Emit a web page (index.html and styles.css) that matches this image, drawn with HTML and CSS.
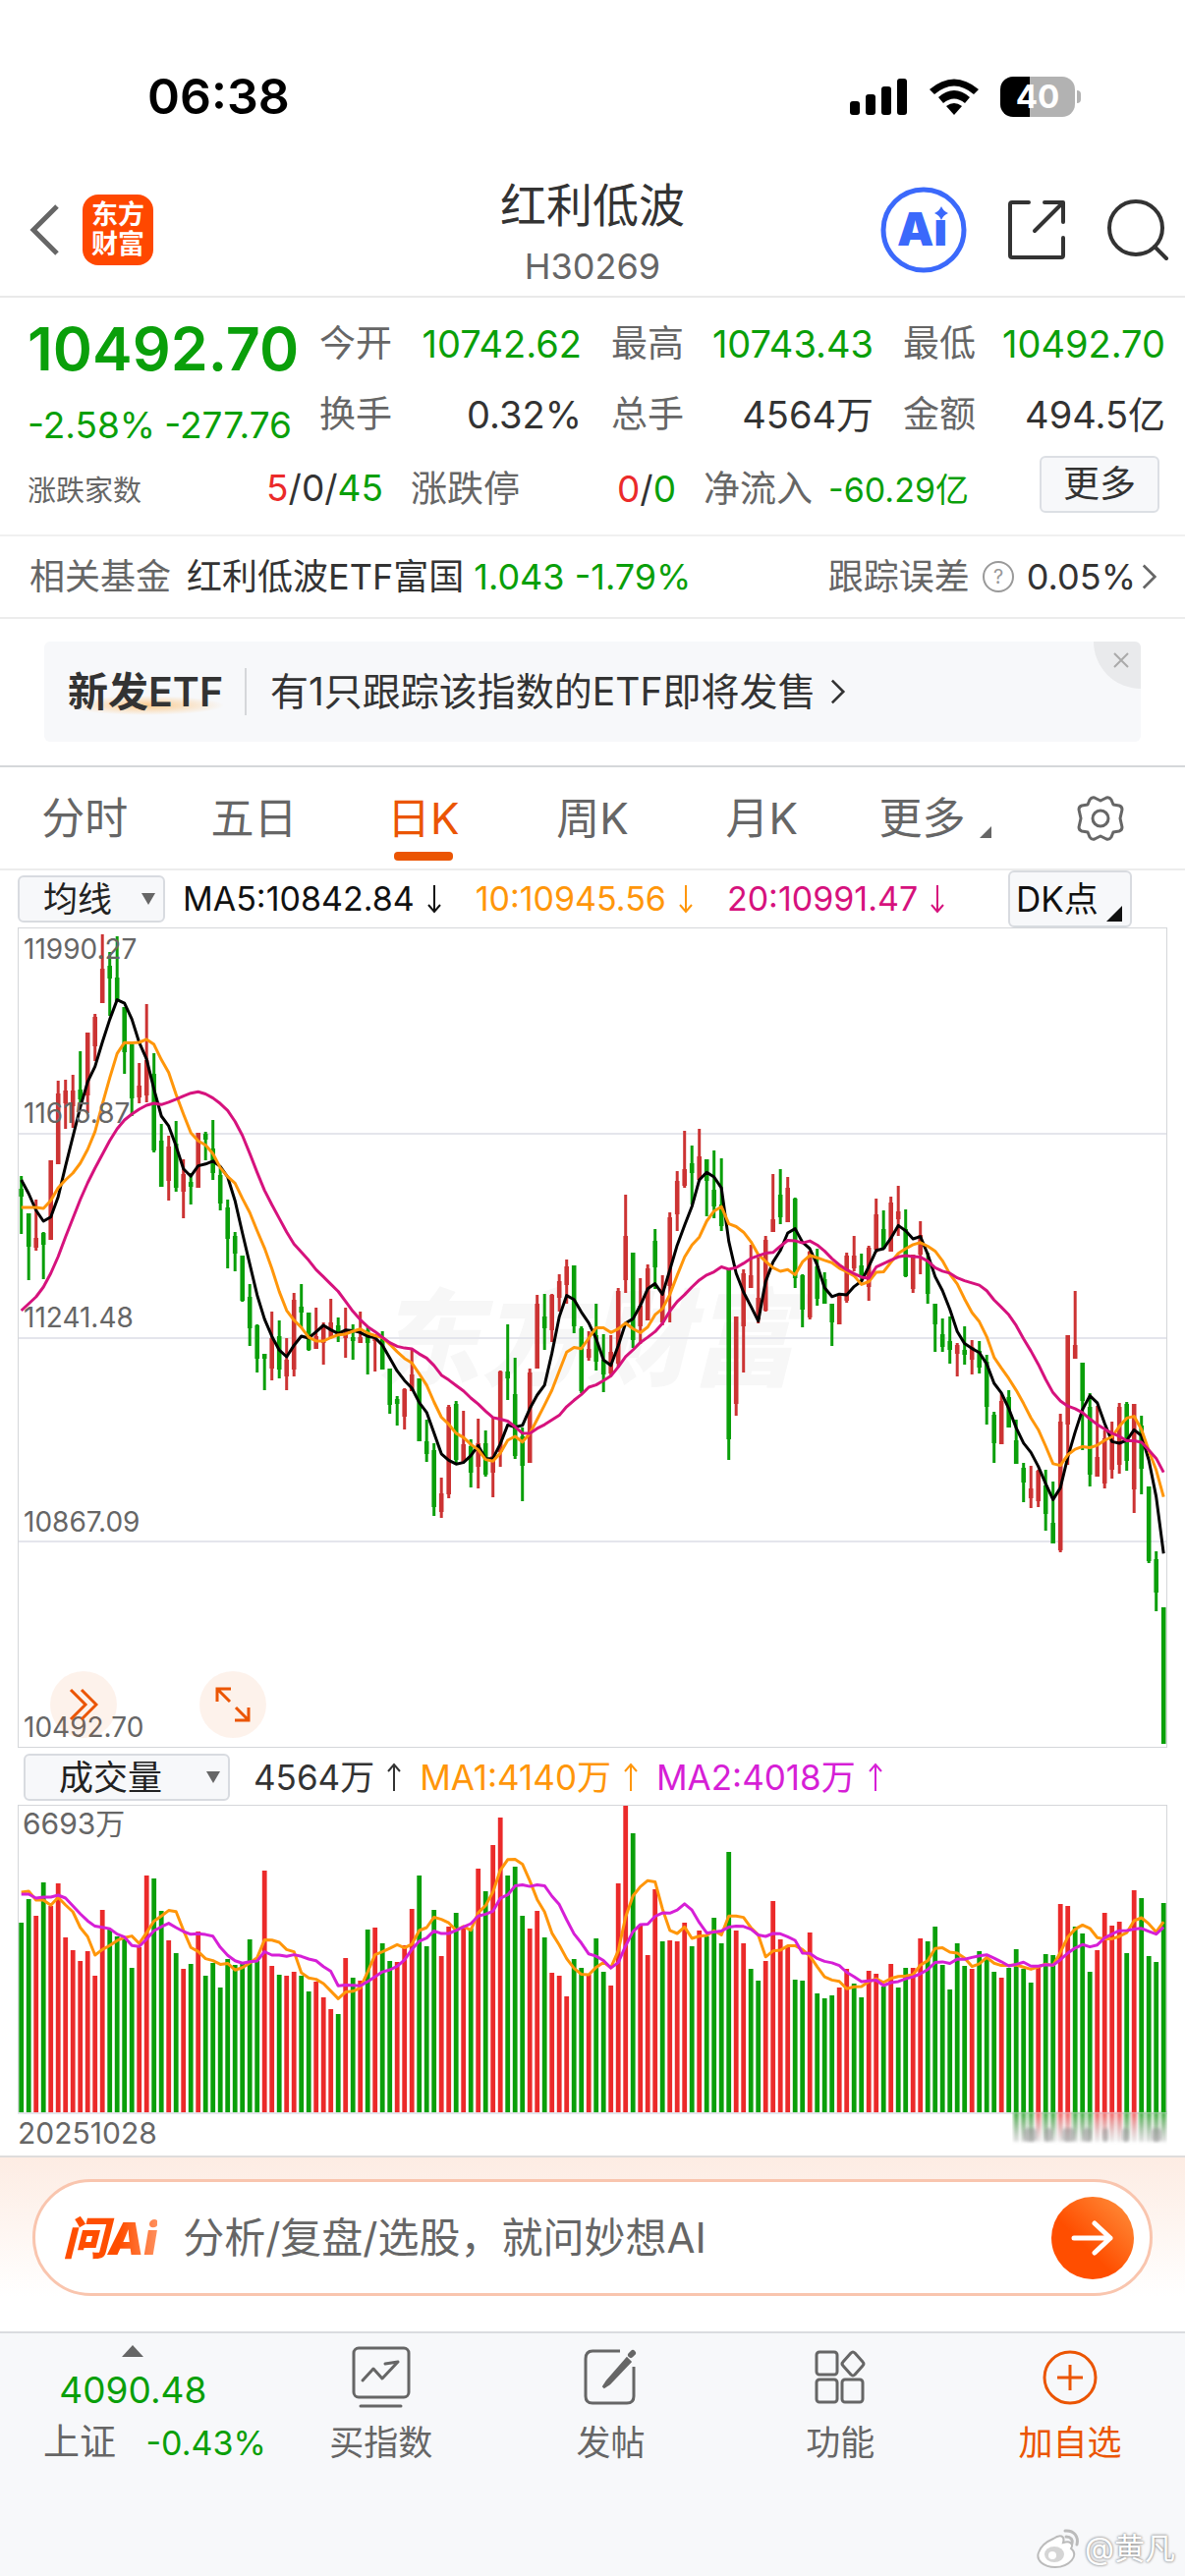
FILE: index.html
```html
<!DOCTYPE html>
<html lang="zh-CN">

<head>
    <meta charset="utf-8">
    <meta name="viewport" content="width=device-width, initial-scale=1.0">
    <title>红利低波 H30269</title>

    <link rel="stylesheet" href="styles.css">
</head>

<body>

    <!-- icons used more than once -->
    <svg class="sprite" aria-hidden="true">
        <symbol id="arrow-down" viewBox="0 0 16 30">
            <path d="M8 1v27M2 21l6 7 6-7" fill="none" stroke="currentColor" stroke-width="2" />
        </symbol>
        <symbol id="arrow-up" viewBox="0 0 16 30">
            <path d="M8 29V2M2 9l6-7 6 7" fill="none" stroke="currentColor" stroke-width="2" />
        </symbol>
        <symbol id="chevron" viewBox="0 0 18 32">
            <path d="M2 3l13 13L2 29" fill="none" stroke="currentColor" stroke-width="3" />
        </symbol>
        <symbol id="corner" viewBox="0 0 16 16">
            <path d="M16 0v16H0z" fill="currentColor" />
        </symbol>
        <symbol id="triangle" viewBox="0 0 14 14">
            <path d="M0 1h14L7 13z" fill="currentColor" />
        </symbol>
    </svg>

    <div class="status">
        <time>06:38</time>
        <div class="status-icons">
            <svg width="60" height="38" viewBox="0 0 60 38">
                <rect x="1" y="24" width="10" height="14" rx="3" />
                <rect x="17" y="17" width="10" height="21" rx="3" />
                <rect x="33" y="9" width="10" height="29" rx="3" />
                <rect x="49" y="1" width="10" height="37" rx="3" />
            </svg>
            <svg width="52" height="38" viewBox="0 0 52 38">
                <path d="M1 12Q26-9 51 12l-5 5Q26 0 6 17z" />
                <path d="M10 20q16-14 32 0l-5 6q-11-9-22 0z" />
                <path d="M18 29q8-6 16 0l-8 9z" />
            </svg>
            <div class="battery"><span>40</span></div>
        </div>
    </div>

    <header class="top">
        <div class="top-left">
            <button class="icon-btn" aria-label="返回">
                <svg width="32" height="54" viewBox="0 0 32 54">
                    <path d="M28 3L4 27l24 24" fill="none" stroke="#666" stroke-width="5" />
                </svg>
            </button>
            <a class="logo" href="#">东方<br>财富</a>
        </div>
        <div class="title">
            <h1>红利低波</h1>
            <p>H30269</p>
        </div>
        <div class="top-right">
            <button class="icon-btn" aria-label="Ai">
                <svg width="88" height="88" viewBox="0 0 88 88">
                    <circle cx="44" cy="44" r="41" fill="none" stroke="#3b69fb" stroke-width="5" />
                    <text class="ai-text" x="17" y="60">Aı</text>
                    <path d="M62 20q2 5 7 7-5 2-7 7-2-5-7-7 5-2 7-7z" fill="#3b69fb" />
                </svg>
            </button>
            <button class="icon-btn" aria-label="分享">
                <svg width="60" height="62" viewBox="0 0 60 62" fill="none" stroke="#333" stroke-width="4" stroke-linecap="round" stroke-linejoin="round">
                    <path d="M22 3H5q-2 0-2 2v52q0 2 2 2h50q2 0 2-2V39" />
                    <path d="M38 3h19v20M56 4L28 32" />
                </svg>
            </button>
            <button class="icon-btn" aria-label="搜索">
                <svg width="64" height="64" viewBox="0 0 64 64" fill="none" stroke="#333" stroke-width="4" stroke-linecap="round">
                    <circle cx="30" cy="30" r="27" />
                    <path d="M49 49l12 12" />
                </svg>
            </button>
        </div>
    </header>

    <section class="quote">
        <div class="quote-main">
            <div class="price-box">
                <strong class="price">10492.70</strong>
                <p class="change"><span>-2.58%</span><span>-277.76</span></p>
            </div>
            <dl class="figures">
                <div><dt>今开</dt><dd class="down">10742.62</dd></div>
                <div><dt>最高</dt><dd class="down">10743.43</dd></div>
                <div><dt>最低</dt><dd class="down">10492.70</dd></div>
                <div><dt>换手</dt><dd>0.32%</dd></div>
                <div><dt>总手</dt><dd>4564万</dd></div>
                <div><dt>金额</dt><dd>494.5亿</dd></div>
            </dl>
        </div>
        <div class="breadth">
            <div class="breadth-item">
                <span class="small">涨跌家数</span>
                <span class="num"><i class="up">5</i>/0/<i class="down">45</i></span>
            </div>
            <div class="breadth-item">
                <span>涨跌停</span>
                <span class="num"><i class="up">0</i>/<i class="down">0</i></span>
            </div>
            <div class="breadth-item">
                <span>净流入</span>
                <span class="flow down">-60.29亿</span>
            </div>
            <button class="more">更多</button>
        </div>
    </section>

    <section class="fund">
        <span class="muted">相关基金</span>
        <a class="fund-name" href="#">红利低波ETF富国 <span class="down">1.043 -1.79%</span></a>
        <a class="fund-error" href="#">
            <span class="muted">跟踪误差</span>
            <svg width="34" height="34" viewBox="0 0 34 34">
                <circle cx="17" cy="17" r="15" fill="none" stroke="#999" stroke-width="2" />
                <text class="help-text" x="17" y="24">?</text>
            </svg>
            0.05%<svg class="chev" width="16" height="30"><use href="#chevron" /></svg>
        </a>
    </section>

    <section class="promo">
        <a class="promo-box" href="#">
            <strong>新发ETF</strong>
            <span>有1只跟踪该指数的ETF即将发售</span>
            <svg width="16" height="28"><use href="#chevron" /></svg>
        </a>
        <button class="promo-close" aria-label="关闭">
            <svg width="16" height="16" viewBox="0 0 16 16"><path d="M1 1l14 14M15 1L1 15" stroke="#aaa" stroke-width="2" /></svg>
        </button>
    </section>

    <nav class="tabs">
        <button>分时</button>
        <button>五日</button>
        <button class="valgt">日K</button>
        <button>周K</button>
        <button>月K</button>
        <button>更多<svg class="tab-corner" width="12" height="14"><use href="#corner" /></svg></button>
        <button aria-label="设置">
            <svg width="48" height="48" viewBox="0 0 48 48" fill="none" stroke="#666" stroke-width="3" stroke-linejoin="round">
                <path d="M18 3l6 3 6-3q3-1 5 2l2 5 6 1q3 1 3 4l-2 9 2 9q0 3-3 4l-6 1-2 5q-2 3-5 2l-6-3-6 3q-3 1-5-2l-2-5-6-1q-3-1-3-4l2-9-2-9q0-3 3-4l6-1 2-5q2-3 5-2z" />
                <circle cx="24" cy="24" r="8" />
            </svg>
        </button>
    </nav>

    <div class="bar bar-ma">
        <label class="pick">
            <select aria-label="均线"><option>均线</option></select>
            <svg width="14" height="14"><use href="#triangle" /></svg>
        </label>
        <span>MA5:10842.84<svg width="16" height="30"><use href="#arrow-down" /></svg></span>
        <span class="orange">10:10945.56<svg width="16" height="30"><use href="#arrow-down" /></svg></span>
        <span class="pink">20:10991.47<svg width="16" height="30"><use href="#arrow-down" /></svg></span>
        <button class="dk">DK点<svg width="16" height="16"><use href="#corner" /></svg></button>
    </div>

    <div class="chart">
        <svg id="kline" viewBox="0 0 1170 835"></svg>
        <button class="float float-next" aria-label="展开">
            <svg width="30" height="34" viewBox="0 0 30 34" fill="none" stroke="#eb5503" stroke-width="3">
                <path d="M2 2l15 15L2 32M13 2l15 15-15 15" />
            </svg>
        </button>
        <button class="float float-full" aria-label="全屏">
            <svg width="36" height="36" viewBox="0 0 36 36" fill="none" stroke="#eb5503" stroke-width="3">
                <path d="M2 15V2h14M3 3l12 12M34 21v13H20M33 33L21 21" />
            </svg>
        </button>
    </div>

    <div class="bar bar-volume">
        <label class="pick pick-wide">
            <select aria-label="指标"><option>成交量</option></select>
            <svg width="14" height="14"><use href="#triangle" /></svg>
        </label>
        <span>4564万<svg width="16" height="30"><use href="#arrow-up" /></svg></span>
        <span class="orange">MA1:4140万<svg width="16" height="30"><use href="#arrow-up" /></svg></span>
        <span class="purple">MA2:4018万<svg width="16" height="30"><use href="#arrow-up" /></svg></span>
    </div>

    <div class="chart">
        <svg id="volume" viewBox="0 0 1170 357"></svg>
    </div>

    <form class="ask">
        <div class="ask-box">
            <span class="ask-logo">问Ai</span>
            <input type="text" aria-label="问妙想AI" placeholder="分析/复盘/选股，就问妙想AI">
            <button type="button" aria-label="发送">
                <svg width="44" height="38" viewBox="0 0 44 38" fill="none" stroke="#fff" stroke-width="5" stroke-linecap="round" stroke-linejoin="round">
                    <path d="M3 19h37M24 4l16 15-16 15" />
                </svg>
            </button>
        </div>
    </form>

    <footer class="bottom">
        <a class="index" href="#">
            <svg width="22" height="12" viewBox="0 0 22 12"><path d="M11 0l11 12H0z" fill="#666" /></svg>
            <strong>4090.48</strong>
            <span>上证 <em>-0.43%</em></span>
        </a>
        <a href="#">
            <svg width="60" height="66" viewBox="0 0 60 66" fill="none" stroke="#666" stroke-width="3" stroke-linecap="round" stroke-linejoin="round">
                <rect x="2" y="3" width="56" height="50" rx="5" />
                <path d="M11 36l11-12 9 10 16-17M34 19l13-2M9 62h41" />
            </svg>
            <span>买指数</span>
        </a>
        <a href="#">
            <svg width="56" height="66" viewBox="0 0 56 66" fill="none" stroke="#666" stroke-width="3">
                <path d="M38 6H10q-7 0-7 8v38q0 7 7 7h35q7 0 7-7V22" />
                <path d="M45 14L25 37l-4 6 6-4 21-22z" fill="#666" />
                <path d="M49 10l2-2" stroke-width="6" stroke-linecap="round" />
            </svg>
            <span>发帖</span>
        </a>
        <a href="#">
            <svg width="56" height="66" viewBox="0 0 56 66" fill="none" stroke="#666" stroke-width="3" stroke-linejoin="round">
                <rect x="4" y="7" width="21" height="23" rx="3" />
                <rect x="4" y="35" width="21" height="23" rx="3" />
                <rect x="30" y="35" width="21" height="23" rx="3" />
                <path d="M39 8q2-2 4 0l8 9q2 2 0 4l-8 9q-2 2-4 0l-8-9q-2-2 0-4z" />
            </svg>
            <span>功能</span>
        </a>
        <a class="add" href="#">
            <svg width="58" height="66" viewBox="0 0 58 66" fill="none" stroke="#eb5503" stroke-width="3">
                <circle cx="29" cy="33" r="26" />
                <path d="M29 20v26M16 33h26" />
            </svg>
            <span>加自选</span>
        </a>
    </footer>

    <div class="credit">
        <svg width="46" height="42" viewBox="0 0 46 42">
            <path d="M18 11c7-5 12-3 10 4 7-2 11 1 8 6 9 7-2 19-16 19C8 40 0 33 3 25c2-6 8-11 15-14z" fill="#fff" stroke="#bbb" stroke-width="2" />
            <ellipse cx="19" cy="27" rx="10" ry="8" fill="#d5d5d5" />
            <circle cx="17" cy="28" r="4" fill="#fff" />
            <path d="M30 3c9-1 14 6 12 14M31 9c5 0 7 3 6 7" fill="none" stroke="#bbb" stroke-width="3" stroke-linecap="round" />
        </svg>
        <span>@黄凡</span>
    </div>

    <script src="script.js"></script>
</body>

</html>
```

FILE: styles.css
```css
* {
    box-sizing: border-box;
}

body {
    margin: 0;
    background-color: #fff;
    color: #333;
    font-family: Inter, "Noto Sans CJK SC", sans-serif;
    font-size: 37px;
    line-height: 48px;
}

h1, p, dl, dd {
    margin: 0;
}

i, em {
    font-style: normal;
}

a {
    color: inherit;
    text-decoration: none;
}

button, select, input {
    margin: 0;
    padding: 0;
    border: 0;
    background: none;
    color: inherit;
    font: inherit;
}

svg {
    display: block;
    flex-shrink: 0;
}

.sprite {
    position: absolute;
    width: 0;
    height: 0;
}

.up {
    color: #eb2a2a;
}

.down {
    color: #0a9f0a;
}

.muted {
    color: #666;
}

.orange {
    color: #ff960a;
}

.pink {
    color: #d6127d;
}

.purple {
    color: #d61fd6;
}

/* status bar */
.status {
    display: flex;
    justify-content: space-between;
    align-items: center;
    height: 166px;
    padding: 30px 106px 0 150px;
    color: #000;
}

.status time {
    font-size: 50px;
    font-weight: 600;
}

.status-icons {
    display: flex;
    align-items: center;
    gap: 21px;
}

.battery {
    position: relative;
    width: 76px;
    height: 41px;
    margin-right: 6px;
    border-radius: 13px;
    background: linear-gradient(to right, #000 40%, #b2b2b2 40%);
    color: #fff;
    font-size: 33px;
    font-weight: 700;
    line-height: 41px;
    text-align: center;
}

.battery::after {
    content: "";
    position: absolute;
    top: 14px;
    right: -6px;
    width: 4px;
    height: 13px;
    border-radius: 0 4px 4px 0;
    background-color: #b2b2b2;
}

/* header */
.top {
    display: grid;
    grid-template-columns: minmax(0, 1fr) auto minmax(0, 1fr);
    align-items: center;
    height: 137px;
    padding: 0 16px 0 30px;
    border-bottom: 2px solid #e9e9e9;
}

.top-left, .top-right {
    display: flex;
    align-items: center;
}

.top-left {
    gap: 22px;
}

.top-right {
    justify-content: flex-end;
    gap: 41px;
}

.logo {
    width: 72px;
    height: 72px;
    padding-top: 6px;
    border-radius: 16px;
    background-color: #ff4800;
    color: #fff;
    font-size: 27px;
    font-weight: 700;
    line-height: 30px;
    text-align: center;
}

.title {
    padding: 6px 14px 0 0;
    text-align: center;
}

.title h1 {
    font-size: 47px;
    font-weight: 400;
    line-height: 68px;
}

.title p {
    color: #666;
    font-size: 36px;
    line-height: 56px;
}

.ai-text {
    fill: #3b69fb;
    font-size: 47px;
    font-weight: 900;
}

/* quote */
.quote {
    padding: 11px 20px 10px 28px;
    border-bottom: 2px solid #f0f0f0;
}

.quote-main {
    display: flex;
    gap: 20px;
}

.price-box {
    width: 277px;
    color: #0a9f0a;
}

.price {
    display: block;
    font-size: 61px;
    font-weight: 600;
    line-height: 82px;
}

.change {
    display: flex;
    justify-content: space-between;
    padding-right: 8px;
    font-size: 37px;
    line-height: 74px;
}

.figures {
    flex: 1;
    display: grid;
    grid-template-columns: repeat(3, 1fr);
    grid-auto-rows: 72px;
    column-gap: 30px;
}

.figures div {
    display: flex;
    justify-content: space-between;
    align-items: center;
}

.figures dt {
    color: #666;
}

.figures dd {
    font-size: 38px;
}

.breadth {
    display: flex;
    align-items: center;
    gap: 28px;
    height: 72px;
    /* the change row is taller than the figures beside it */
    margin-top: -8px;
}

.breadth-item {
    display: flex;
    justify-content: space-between;
    align-items: baseline;
    width: 270px;
    color: #666;
}

.breadth-item:first-child {
    width: 362px;
}

.small {
    font-size: 29px;
}

.num {
    color: #333;
}

.flow {
    font-size: 34px;
}

.more {
    width: 122px;
    height: 58px;
    margin: 0 6px 10px auto;
    border: 2px solid #dcdfe4;
    border-radius: 6px;
    background-color: #f7f8fa;
}

/* related fund */
.fund {
    display: flex;
    align-items: center;
    gap: 16px;
    height: 84px;
    padding: 0 28px 0 30px;
    border-bottom: 2px solid #ececec;
    font-size: 36px;
}

.fund-error {
    display: flex;
    align-items: center;
    gap: 12px;
    margin-left: auto;
}

.chev {
    margin-left: -6px;
    color: #666;
}

.help-text {
    fill: #999;
    font-size: 20px;
    text-anchor: middle;
}

/* new ETF banner */
.promo {
    position: relative;
    padding: 23px 45px 24px;
    border-bottom: 2px solid #d5d7da;
}

.promo-box {
    display: flex;
    align-items: center;
    height: 102px;
    padding-left: 24px;
    border-radius: 6px;
    background-color: #f7f8fa;
    font-size: 39px;
}

.promo-box strong {
    padding-right: 22px;
    border-right: 2px solid #d5d7da;
    background: radial-gradient(ellipse at center, #fbcb8f, transparent 70%) 0 100% / 160px 20px no-repeat;
    font-size: 41px;
    font-weight: 600;
}

.promo-box span {
    margin: 0 14px 0 24px;
}

.promo-close {
    position: absolute;
    top: 23px;
    right: 45px;
    display: flex;
    justify-content: center;
    align-items: center;
    width: 48px;
    height: 48px;
    padding: 0 0 10px 8px;
    border-radius: 0 6px 0 48px;
    background-color: #e9eaec;
}

/* period tabs */
.tabs {
    display: grid;
    grid-template-columns: repeat(7, 1fr);
    height: 105px;
    border-bottom: 2px solid #ececec;
}

.tabs button {
    position: relative;
    display: flex;
    justify-content: center;
    align-items: center;
    color: #666;
    font-size: 44px;
}

.tabs .valgt {
    color: #eb5503;
}

.tabs .valgt::after {
    content: "";
    position: absolute;
    bottom: 8px;
    width: 60px;
    height: 9px;
    border-radius: 4px;
    background-color: #eb5503;
}

.tab-corner {
    align-self: flex-end;
    margin: 0 -8px 30px 14px;
}

/* indicator rows */
.bar {
    display: flex;
    align-items: center;
    height: 58px;
    padding: 0 18px;
    font-size: 34px;
}

.bar span {
    display: flex;
    align-items: center;
    gap: 12px;
}

.bar-ma {
    gap: 34px;
    color: #111;
}

.bar-ma .pick {
    margin-right: -16px;
}

.bar-volume {
    gap: 18px;
    padding: 2px 24px 0;
    font-size: 35px;
}

.pick {
    position: relative;
    display: flex;
    align-items: center;
    width: 150px;
    height: 48px;
    border: 2px solid #d8dbe0;
    border-radius: 6px;
    background-color: #f7f8fa;
    color: #222;
    font-size: 35px;
}

.pick select {
    width: 100%;
    padding-left: 24px;
    appearance: none;
}

.pick svg {
    position: absolute;
    right: 8px;
    color: #666;
}

.pick-wide {
    width: 210px;
    margin-right: 6px;
}

.pick-wide select {
    padding-left: 34px;
}

.dk {
    position: relative;
    width: 126px;
    height: 58px;
    margin: 0 36px 0 auto;
    padding-left: 6px;
    border: 2px solid #d8dbe0;
    border-radius: 6px;
    background-color: #f7f8fa;
    font-size: 35px;
    text-align: left;
}

.dk svg {
    position: absolute;
    right: 8px;
    bottom: 4px;
}

/* charts */
.chart {
    position: relative;
    padding: 0 18px;
}

.chart > svg {
    width: 100%;
    height: auto;
}

.chart .frame, .chart .grid {
    fill: none;
    stroke: #d5d7da;
}

.chart .grid {
    stroke: #e4e5ec;
    stroke-width: 2;
}

.chart .axis {
    fill: #666;
    font-size: 28px;
}

.chart .axis-big {
    font-size: 30px;
}

.chart .brand {
    fill: #f7f7f7;
    font-size: 107px;
    font-weight: 900;
    font-style: italic;
    text-anchor: middle;
}

.chart polyline {
    fill: none;
    stroke-width: 3;
    stroke-linejoin: round;
}

.float {
    position: absolute;
    bottom: 10px;
    display: flex;
    justify-content: center;
    align-items: center;
    width: 68px;
    height: 68px;
    border-radius: 50%;
    background-color: rgba(235, 85, 3, .08);
}

.float-next {
    left: 51px;
}

.float-full {
    left: 203px;
}

/* ask bar */
.ask {
    padding: 22px 33px 36px;
    border-top: 2px solid #dedcdc;
    background: linear-gradient(#fdece3, #fff 80%);
}

.ask-box {
    display: flex;
    align-items: center;
    height: 119px;
    padding: 0 16px 0 28px;
    border: 3px solid #f9c5ae;
    border-radius: 60px;
    background-color: #fff;
}

.ask-logo {
    background: linear-gradient(to right, #ff4e00 60%, #ff8f5c);
    background-clip: text;
    -webkit-background-clip: text;
    color: transparent;
    font-size: 46px;
    font-weight: 900;
    font-style: italic;
}

.ask-box input {
    flex: 1;
    min-width: 0;
    margin-left: 26px;
    outline: none;
    font-size: 42px;
}

.ask-box input::placeholder {
    color: #666;
    opacity: 1;
}

.ask-box button {
    display: flex;
    justify-content: center;
    align-items: center;
    width: 84px;
    height: 84px;
    border-radius: 50%;
    background: linear-gradient(to top right, #ff4e00 40%, #ff9340);
}

/* bottom bar */
.bottom {
    display: grid;
    grid-template-columns: 1.15fr repeat(4, 1fr);
    height: 249px;
    padding-top: 12px;
    border-top: 2px solid #dadcdf;
    background-color: #f7f8fa;
    color: #666;
    font-size: 35px;
}

.bottom a {
    display: flex;
    flex-direction: column;
    align-items: center;
    gap: 8px;
}

.bottom a > span {
    line-height: 50px;
}

.bottom .index {
    gap: 0;
}

.index strong {
    margin: 8px 0 2px;
    color: #0a9f0a;
    font-size: 37px;
    font-weight: 400;
    line-height: 52px;
}

.index span {
    padding-left: 44px;
    align-self: flex-start;
    font-size: 37px;
    white-space: nowrap;
}

.index em {
    margin-left: 20px;
    color: #0a9f0a;
    font-size: 34px;
}

.bottom .add {
    color: #eb5503;
}

.credit {
    position: absolute;
    right: 10px;
    top: 2570px;
    display: flex;
    align-items: center;
    gap: 4px;
    color: #fff;
    font-size: 31px;
    text-shadow: 0 0 3px #888, 0 0 2px #999;
}
```

FILE: script.js
```javascript
// one row per day: close direction, high, body top, body bottom, low (chart units from the top)
const candles = `
g253,267,273,312 g291,292,324,359 r277,317,325,329 g310,312,322,358 r237,238,317,318 r156,170,240,241
r155,167,178,205 r150,167,181,204 g126,166,174,181 r107,108,170,189 r88,92,120,136 r7,43,76,77
g25,40,51,90 g9,52,74,75 g81,82,126,149 g119,120,173,192 r138,162,172,179 r78,136,170,178
g128,150,226,229 g200,218,263,264 r212,224,257,278 g197,221,264,269 r236,252,268,296 g250,260,263,282
r209,210,264,264 g208,211,215,237 g196,226,249,257 g245,253,280,288 g277,286,316,347 g310,315,331,350
g334,335,379,381 g363,377,407,426 g404,406,438,453 g435,435,438,471 r391,419,448,461 g400,417,449,459
r418,441,456,471 r372,380,449,457 g363,387,391,408 g392,393,429,431 r387,417,428,429 r402,408,422,445
r378,403,417,418 g397,406,410,422 r387,411,417,438 g404,418,420,440 r391,418,422,423 g407,411,422,455
r414,417,420,452 g411,418,449,450 g449,450,485,495 g477,481,484,507 r469,471,497,511 r429,456,471,472
g459,460,522,523 g501,524,535,544 g525,533,589,599 r560,577,594,601 r486,489,576,581 g482,486,541,547
r492,527,543,544 g521,529,554,570 r500,526,548,571 g512,526,556,559 r498,539,554,580 r451,453,533,549
g404,453,458,481 g438,476,537,541 g509,519,547,584 r449,454,544,544 r374,384,448,449 g373,397,407,430
r373,375,409,422 r353,361,376,391 r338,346,363,383 g344,345,405,413 g406,409,471,474 r411,430,437,441
g383,416,441,451 g414,441,454,473 r415,433,453,456 r367,371,443,448 r272,315,358,372 g331,332,419,428
r357,386,405,424 r343,348,399,399 g307,320,345,368 r354,369,401,405 r290,296,364,402 r248,259,291,309
r207,247,262,265 g222,241,249,282 r205,234,256,258 g237,237,257,294 g227,268,283,296 g235,283,303,309
g349,349,520,542 r396,397,484,497 r348,353,405,453 r323,355,366,367 r336,378,398,403 r314,319,389,391
r251,298,309,310 g246,273,294,302 r254,266,299,300 g275,277,356,367 g353,355,388,407 r329,331,396,399
g327,346,377,385 g351,359,382,383 g384,384,401,426 r373,375,403,404 r331,335,379,382 r314,335,346,350
g332,345,354,361 r324,327,365,380 r276,293,327,331 g288,308,326,327 r274,281,329,330 r263,290,296,314
g287,308,354,356 r333,334,367,372 r299,314,332,353 g331,338,372,383 g384,384,403,432 g398,415,426,432
g396,422,429,444 r423,426,433,457 g406,431,434,445 r420,428,439,455 g421,432,447,454 g435,443,487,506
g493,497,524,545 r474,483,525,526 g471,479,508,509 g501,523,545,546 g545,551,564,585 r548,572,580,591
r552,554,583,590 g552,569,596,614 g564,607,626,627 r495,504,633,636 r415,416,505,547 r370,426,438,439
g443,444,481,532 g474,489,556,569 r487,540,558,559 r512,521,565,571 r503,519,551,561 r484,489,546,556
g483,486,542,553 r485,486,571,596 g497,508,550,577 g569,570,644,647 g635,644,676,696 g692,693,830,830
`;

const volumes = `
g193 g217 r200 g234 r210 r233 r178 r165 r154 r164 r139 r206 g186 g179 g179 g147 r168 r241 g238 g205
r175 g162 r146 g151 r184 g139 g152 g127 g156 g150 g151 g176 g154 r246 r149 g140 r139 r143 g139 g123
r133 r117 r105 g100 r157 g137 r134 g186 r188 g172 g154 r153 r170 r207 g241 g169 g206 r159 r189 g203
r189 g187 r248 g225 r272 r300 g241 g250 g200 r187 r205 g178 r142 r139 r118 g156 g147 r140 g177 g143
r129 r233 r312 g284 r190 r160 r227 g174 r175 r174 r193 g169 r185 g179 g198 g172 g265 r185 r172 g146
g134 r154 r215 r176 r168 g135 g134 r183 g121 g116 g119 r127 r146 g131 g117 r144 r141 g128 r151 g127
g147 r147 r177 g174 g189 g150 g125 g172 g149 r146 g164 g157 g143 r137 g147 g166 g146 g132 r149 g161
g160 r212 r210 g189 g182 g143 r165 r203 r190 r194 g162 r226 g218 g159 g153 g213
`;

// average values of the days whose window starts before the first bar
const head = {
    ma5: [257, 271, 288, 299],
    ma10: [285, 285, 285, 286, 278, 265, 257, 250, 240],
    ma20: [390, 383, 376, 366, 352, 335, 315, 296, 277, 260, 245, 231, 217, 205, 196, 190, 185, 181, 179],
    vol5: [224, 225, 216, 216],
    vol10: [222, 222, 218, 219, 219, 221, 218, 210, 202]
};

const green = "#0a9f0a";

function parse(text) {
    return text.trim().split(/\s+/).map(item => ({
        up: item[0] == "r",
        v: item.slice(1).split(",").map(Number)
    }));
}

function x(i) {
    return (3.7 + i * 7.5).toFixed(1);
}

function average(values, days, start) {
    return values.map((value, i) => {
        if (i < start.length) return start[i];
        return values.slice(i - days + 1, i + 1).reduce((a, b) => a + b) / days;
    });
}

function line(values, color) {
    const points = values.map((y, i) => x(i) + "," + y.toFixed(1)).join(" ");
    return `<polyline points="${points}" stroke="${color}" />`;
}

function showKline() {
    const days = parse(candles);
    const close = days.map(d => d.up ? d.v[1] : d.v[2]);

    let out = `<text class="brand" x="578" y="458">东方财富</text>`;
    [210, 418, 625].forEach(y => {
        out += `<path class="grid" d="M0 ${y}H1170" />`;
    });

    days.forEach((d, i) => {
        const color = d.up ? "#cc3333" : green;
        const [high, top, bottom, low] = d.v;
        out += `<path d="M${x(i)} ${high}V${low}" stroke="${color}" stroke-width="3" />`;
        out += `<path d="M${x(i)} ${top - 1}V${bottom + 1}" stroke="${color}" stroke-width="4.6" />`;
    });

    out += line(average(close, 5, head.ma5), "#000");
    out += line(average(close, 10, head.ma10), "#ff960a");
    out += line(average(close, 20, head.ma20), "#d6127d");

    [["11990.27", 32], ["11615.87", 199], ["11241.48", 407], ["10867.09", 615], ["10492.70", 824]].forEach(([label, y]) => {
        out += `<text class="axis" x="6" y="${y}">${label}</text>`;
    });

    out += `<rect class="frame" x=".5" y=".5" width="1169" height="834" />`;
    document.querySelector("#kline").innerHTML = out;
}

function showVolume() {
    const bars = parse(volumes);
    const heights = bars.map(b => b.v[0]);

    let out = `<defs>
        <linearGradient id="fade-up" x2="0" y2="1"><stop stop-color="#f56060" /><stop offset="1" stop-color="#bbb" stop-opacity=".3" /></linearGradient>
        <linearGradient id="fade-down" x2="0" y2="1"><stop stop-color="#3db03d" /><stop offset="1" stop-color="#999" stop-opacity=".3" /></linearGradient>
        <filter id="soft"><feGaussianBlur stdDeviation="1.5" /></filter>
    </defs>
    <rect class="frame" x=".5" y=".5" width="1169" height="314" />
    <path class="grid" d="M0 314H1170" />
    <text class="axis axis-big" x="5" y="30">6693万</text>
    <text class="axis axis-big" x="0" y="345">20251028</text>`;

    bars.forEach((b, i) => {
        out += `<rect x="${i * 7.5 + 1.3}" y="${313 - b.v[0]}" width="4.8" height="${b.v[0]}" fill="${b.up ? "#eb2a2a" : green}" />`;
        // the last dates fade out under the bars
        if (i > 134) {
            out += `<rect x="${i * 7.5 + 1}" y="313" width="5.5" height="30" fill="url(#fade-${b.up ? "up" : "down"})" filter="url(#soft)" />`;
        }
    });

    [[1024, 13], [1045, 8], [1063, 13], [1084, 9], [1104, 6], [1124, 7], [1154, 10]].forEach(([left, width]) => {
        out += `<rect x="${left}" y="329" width="${width}" height="14" rx="4" fill="#888" opacity=".5" filter="url(#soft)" />`;
    });

    out += line(average(heights, 5, head.vol5).map(h => 313 - h), "#ff960a");
    out += line(average(heights, 10, head.vol10).map(h => 313 - h), "#d61fd6");
    document.querySelector("#volume").innerHTML = out;
}

showKline();
showVolume();
```
